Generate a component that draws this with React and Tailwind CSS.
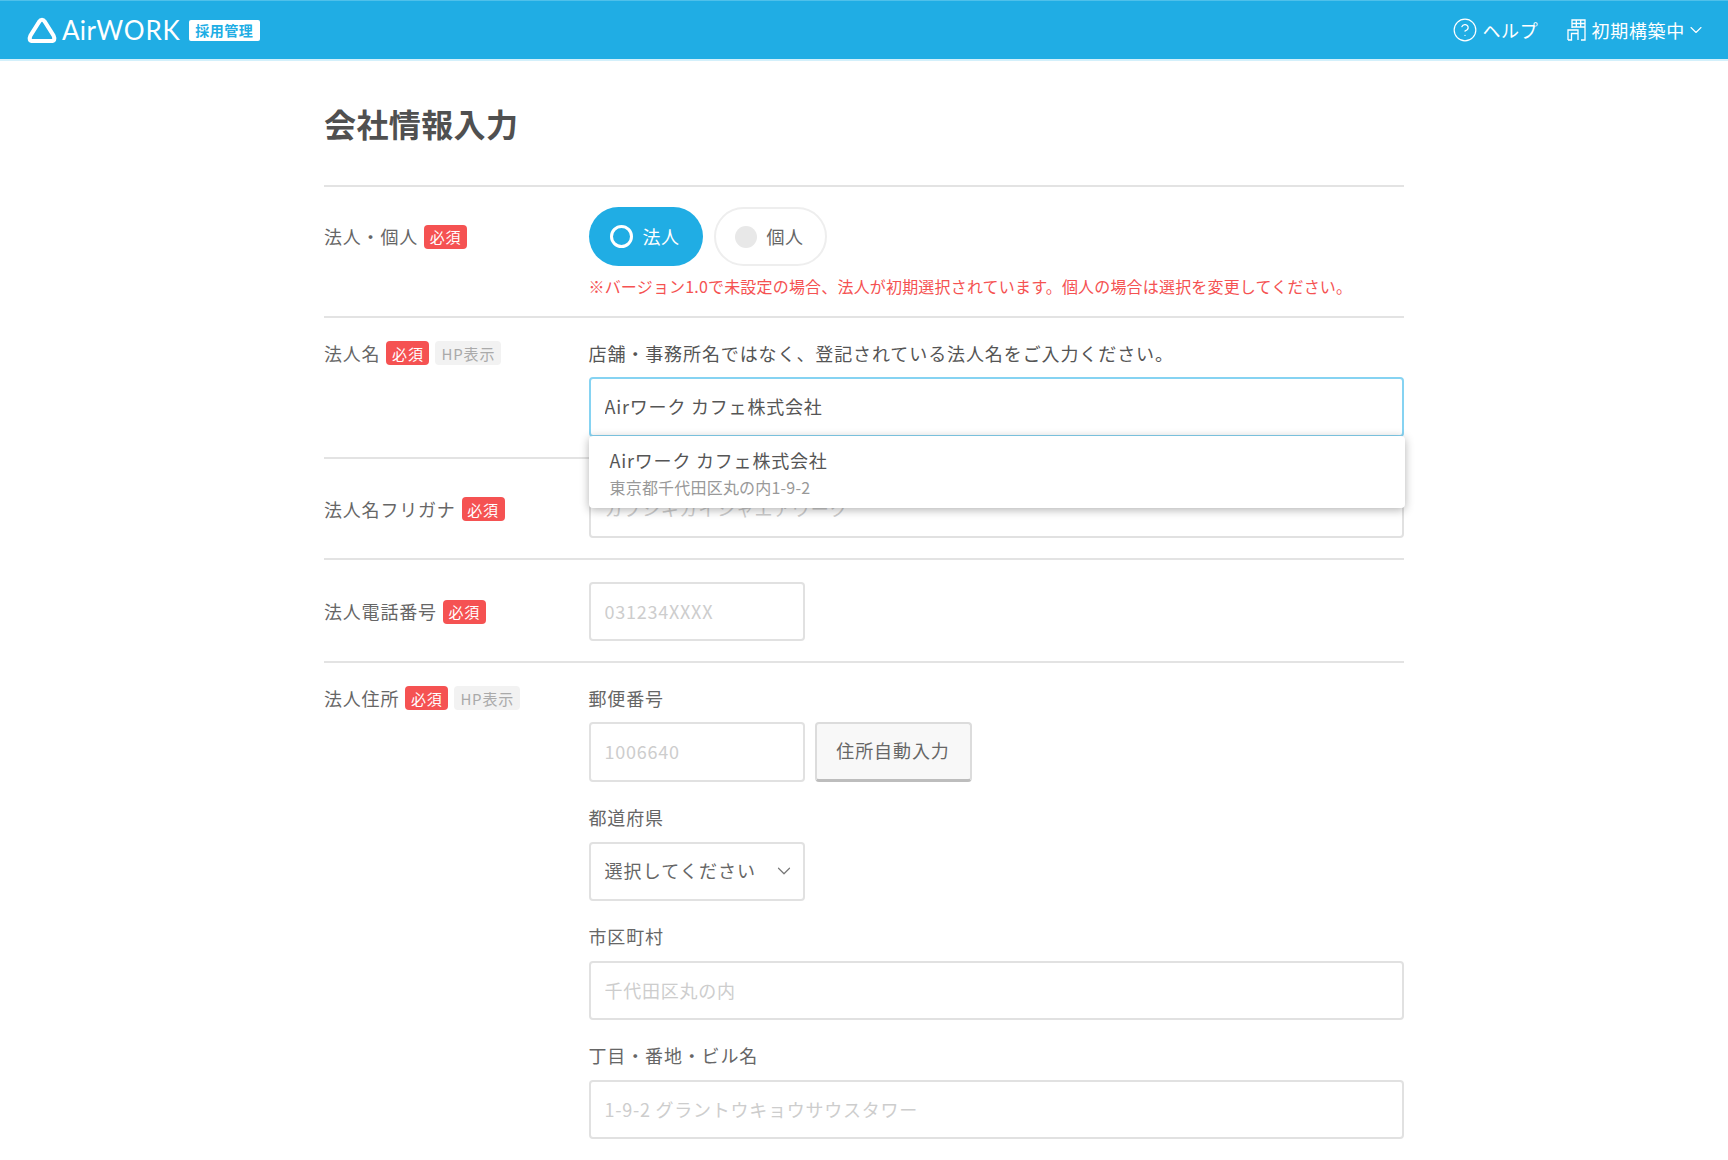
import React from "react";
import { ChevronDown, CircleHelp } from "lucide-react";

const Required = () => (
  <span className="inline-flex h-6 w-[43px] shrink-0 items-center justify-center rounded bg-[#f55252] text-[15px] leading-none text-white">
    必須
  </span>
);

const HpBadge = () => (
  <span className="inline-flex h-6 w-[66px] shrink-0 items-center justify-center rounded bg-[#f2f2f2] text-[15px] leading-none text-[#aaa]">
    HP表示
  </span>
);

const TextInput = ({ placeholder, className = "" }) => (
  <input
    readOnly
    placeholder={placeholder}
    className={`h-[59px] rounded border-2 border-[#e1e1e1] bg-white px-[14px] pb-[2px] text-[18px] tracking-[0.75px] text-[#555] outline-none placeholder:text-[#cdcdcd] ${className}`}
  />
);

const Row = ({ children, className = "" }) => (
  <div className={`flex border-t-2 border-[#e3e3e3] ${className}`}>{children}</div>
);

const Label = ({ children, className = "" }) => (
  <div className={`flex w-[264.5px] shrink-0 items-center gap-[6px] text-[18px] tracking-[0.8px] text-[#666] ${className}`}>
    {children}
  </div>
);

const SubLabel = ({ children }) => (
  <div className="h-[36px] text-[18px] leading-[36px] tracking-[0.85px] text-[#666]">{children}</div>
);

const BuildingIcon = () => (
  <svg width="20" height="24" viewBox="0 0 20 24" fill="none" stroke="white" strokeWidth="1.3">
    <path d="M5 10V2h13v20h-4" />
    <path d="M9.300 2v7h4.400V2M5 5.500h13M5 9h13" />
    <path d="M1 22V12h10v10M1 22h3.500v-6.500H11" />
  </svg>
);

const Logo = () => (
  <div className="flex items-center">
    <svg width="32" height="28" viewBox="0 0 32 28" fill="none">
      <path
        d="M13 6Q16 1.500 19 6L27.500 19.500Q30 25 25 25H7Q2 25 4.500 19.500Z"
        stroke="white"
        strokeWidth="4.200"
        strokeLinejoin="round"
      />
    </svg>
    <span className="ml-[4px] font-['Lato',sans-serif] text-[26px] leading-none tracking-[0.3px] text-white">
      Air<span className="tracking-[0.9px]">WORK</span>
    </span>
    <span className="ml-[8px] flex h-[21px] w-[71px] items-center justify-center rounded-[2px] bg-white text-[14px] font-bold leading-none tracking-[0.5px] text-[#20ade4]">
      採用管理
    </span>
  </div>
);

export default function App() {
  return (
    <div className="relative h-[1160px] overflow-hidden bg-white font-['Noto_Sans_CJK_JP','Noto_Sans',sans-serif]">
      <header className="flex h-[61px] items-center justify-between border-t border-b-2 border-t-[#4fc0ea] border-b-[#d3f0fb] bg-[#20ade4] pl-[26px] pr-[25px]">
        <Logo />
        <div className="flex items-center text-[18px] tracking-[0.7px] text-white">
          <CircleHelp size={26} strokeWidth={1.1} />
          <span className="ml-[4px]">ヘルプ</span>
          <span className="ml-[28px]">
            <BuildingIcon />
          </span>
          <span className="ml-[5px]">初期構築中</span>
          <ChevronDown size={20} strokeWidth={1.3} className="ml-[1px] mr-[-3px]" />
        </div>
      </header>

      <main className="mx-auto w-[1080px]">
        <h1 className="flex h-[124px] items-center text-[32px] font-bold tracking-[0.4px] text-[#505050]">
          会社情報入力
        </h1>

        <Row className="h-[131px] pt-[20px]">
          <Label className="h-[59px]">
            法人・個人 <Required />
          </Label>
          <div>
            <div className="flex gap-[11px]">
              <div className="flex h-[59px] w-[114px] items-center rounded-full bg-[#20ade4] pl-[21px] text-[18px] tracking-[0.6px] text-white">
                <span className="h-[23px] w-[23px] rounded-full border-[3px] border-white" />
                <span className="ml-[10px]">法人</span>
              </div>
              <div className="flex h-[59px] w-[113px] items-center rounded-full border-2 border-[#eee] pl-[19px] text-[18px] tracking-[0.6px] text-[#666]">
                <span className="h-[22px] w-[22px] rounded-full bg-[#e8e8e8]" />
                <span className="ml-[10px]">個人</span>
              </div>
            </div>
            <p className="mt-[6px] text-[16px] leading-[28px] tracking-[0.18px] text-[#f55252]">
              ※バージョン1.0で未設定の場合、法人が初期選択されています。個人の場合は選択を変更してください。
            </p>
          </div>
        </Row>

        <Row className="h-[141px] pt-[17px]">
          <Label className="h-[36px]">
            法人名 <Required /> <HpBadge />
          </Label>
          <div className="relative flex-1">
            <p className="h-[42px] text-[18px] leading-[36px] tracking-[0.9px] text-[#555]">
              店舗・事務所名ではなく、登記されている法人名をご入力ください。
            </p>
            <input
              readOnly
              value="Airワーク カフェ株式会社"
              className="h-[60px] w-full rounded border-2 border-[#86d3f2] px-[14px] pb-[2px] text-[18px] tracking-[0.8px] text-[#555] outline-none"
            />
            <div className="absolute left-0 right-[-1px] top-[101px] z-10 h-[72px] rounded bg-white pl-[21px] pt-[9px] shadow-[0_2px_10px_rgba(0,0,0,0.3)]">
              <div className="text-[18px] leading-[30px] tracking-[0.8px] text-[#555]">Airワーク カフェ株式会社</div>
              <div className="text-[16px] leading-[25px] tracking-[0.2px] text-[#999]">東京都千代田区丸の内1-9-2</div>
            </div>
          </div>
        </Row>

        <Row className="h-[101px] pt-[20px]">
          <Label className="h-[60px]">
            法人名フリガナ <Required />
          </Label>
          <TextInput placeholder="カブシキガイシャエアワーク" className="flex-1" />
        </Row>

        <Row className="h-[103px] pt-[22px]">
          <Label className="h-[59px]">
            法人電話番号 <Required />
          </Label>
          <TextInput placeholder="031234XXXX" className="w-[216px]" />
        </Row>

        <Row className="pt-[17px]">
          <Label className="h-[36px]">
            法人住所 <Required /> <HpBadge />
          </Label>
          <div className="flex flex-1 flex-col">
            <SubLabel>郵便番号</SubLabel>
            <div className="mt-[6px] flex gap-[10px]">
              <TextInput placeholder="1006640" className="h-[60px] w-[216px]" />
              <button className="h-[60px] w-[157px] rounded border-2 border-b-[3px] border-[#dcdcdc] border-b-[#bdbdbd] bg-[#f8f8f8] pb-[2px] text-[18px] tracking-[0.9px] text-[#666]">
                住所自動入力
              </button>
            </div>
            <div className="mt-[17px]">
              <SubLabel>都道府県</SubLabel>
            </div>
            <div className="mt-[7px] flex h-[59px] w-[216px] items-center justify-between rounded border-2 border-[#e1e1e1] pb-[2px] pl-[14px] pr-[8px] text-[18px] tracking-[1.1px] text-[#666]">
              選択してください
              <ChevronDown size={22} strokeWidth={1.3} className="text-[#777]" />
            </div>
            <div className="mt-[17px]">
              <SubLabel>市区町村</SubLabel>
            </div>
            <TextInput placeholder="千代田区丸の内" className="mt-[7px] w-full" />
            <div className="mt-[17px]">
              <SubLabel>丁目・番地・ビル名</SubLabel>
            </div>
            <TextInput placeholder="1-9-2 グラントウキョウサウスタワー" className="mt-[7px] w-full" />
          </div>
        </Row>
      </main>
    </div>
  );
}
